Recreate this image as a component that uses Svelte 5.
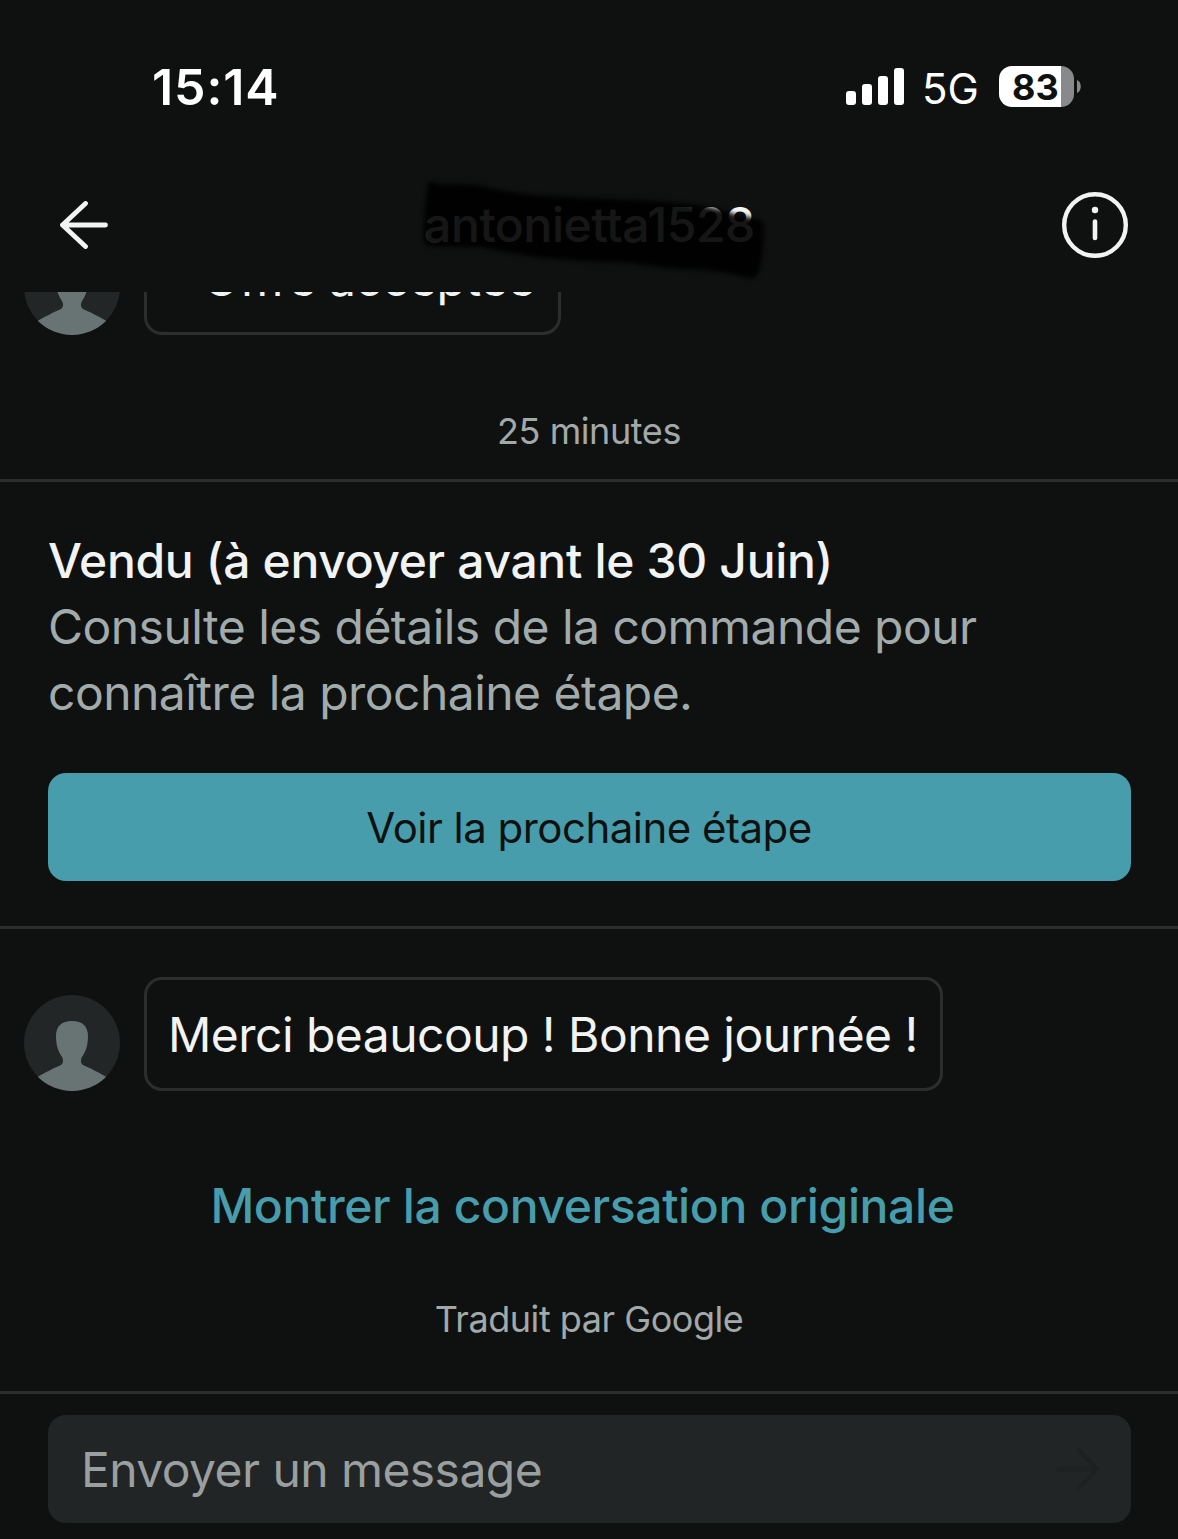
<script>
  const card = {
    title: 'Vendu (à envoyer avant le 30 Juin)',
    lines: ['Consulte les détails de la commande pour', 'connaître la prochaine étape.'],
    action: 'Voir la prochaine étape'
  };
  const bars = [
    { x: 0, h: 14 },
    { x: 16, h: 21 },
    { x: 32, h: 29 },
    { x: 48, h: 37 }
  ];
</script>

{#snippet avatar()}
  <svg class="avatar" viewBox="0 0 96 96" aria-hidden="true">
    <clipPath id="disc"><circle cx="48" cy="48" r="48" /></clipPath>
    <g clip-path="url(#disc)">
      <rect width="96" height="96" fill="#222627" />
      <path
        fill="#687474"
        d="M48 26C58 26 64 31 64 41C64 51 61.500 57 58 62C56.500 65 56.500 68 59 70C66 73 74 77 84 83V96H12V83C22 77 30 73 37 70C39.500 68 39.500 65 38 62C34.500 57 32 51 32 41C32 31 38 26 48 26Z"
      />
    </g>
  </svg>
{/snippet}

<div class="screen">
  <div class="status">
    <span class="time">15:14</span>
    <div class="indicators">
      <svg class="signal" viewBox="0 0 58 37" aria-hidden="true">
        {#each bars as b}
          <rect x={b.x} y={37 - b.h} width="10" height={b.h} rx="3" fill="#fff" />
        {/each}
      </svg>
      <span class="network">5G</span>
      <div class="battery"><span>83</span></div>
      <svg class="nub" viewBox="0 0 4 13" aria-hidden="true"><path d="M0 0C5 2 5 11 0 13Z" fill="#88898a" /></svg>
    </div>
  </div>

  <header>
    <svg class="back" viewBox="0 0 48 48" aria-hidden="true">
      <path d="M25.500 2.500L2.500 24L25.500 45.500M2.500 24H45.500" />
    </svg>
    <div class="name">
      <span>antonietta1528</span>
      <svg class="scribble" viewBox="0 0 370 120" aria-hidden="true">
        <path
          d="M17 11Q20 7 27 12Q50 11 72 14Q95 20 125 23Q170 26 215 27Q255 29 288 33Q312 37 326 43Q345 45 352 50Q354 53 353 60Q352 90 347 102Q344 108 336 106Q310 98 270 97Q240 95 220 91Q170 90 130 86Q95 81 70 75Q40 76 16 74Q11 70 12 58Q13 35 17 11Z"
        />
      </svg>
    </div>
    <svg class="info" viewBox="0 0 66 66" aria-hidden="true">
      <circle cx="33" cy="33" r="30.800" fill="none" stroke="#f2f3f3" stroke-width="4.400" />
      <circle cx="33" cy="18" r="3.200" fill="#f2f3f3" />
      <path d="M33 29.500V46" stroke="#f2f3f3" stroke-width="4.600" stroke-linecap="round" />
    </svg>
  </header>

  <main>
    <div class="row first">
      {@render avatar()}
      <div class="bubble offer"><span>Offre acceptée</span></div>
    </div>

    <time class="stamp">25 minutes</time>

    <section class="card">
      <h2><span>{card.title}</span></h2>
      <p>
        {#each card.lines as line}<span>{line}</span>{/each}
      </p>
      <button><span>{card.action}</span></button>
    </section>

    <div class="row second">
      {@render avatar()}
      <div class="bubble"><span>Merci beaucoup ! Bonne journée !</span></div>
    </div>

    <a class="original" href="#original"><span>Montrer la conversation originale</span></a>
    <div class="credit">Traduit par Google</div>
  </main>

  <footer>
    <div class="field">
      <span>Envoyer un message</span>
      <svg class="send" viewBox="0 0 44 44" aria-hidden="true">
        <path d="M2.500 22H41M22.500 2.500L41 22L22.500 41.500" />
      </svg>
    </div>
  </footer>
</div>

<style>
  :global(body) {
    margin: 0;
    background: #0f1110;
  }
  * {
    box-sizing: border-box;
  }
  .screen {
    width: 1178px;
    height: 1539px;
    overflow: hidden;
    display: flex;
    flex-direction: column;
    background: #0f1110;
    color: #f2f3f3;
    font: 400 48px/66px Inter, 'Liberation Sans', sans-serif;
    letter-spacing: -0.53px;
    white-space: nowrap;
  }
  .status {
    height: 158px;
    flex: none;
    display: flex;
    justify-content: space-between;
    padding: 54px 97px 0 152px;
    color: #fff;
  }
  .time {
    font-size: 50px;
    font-weight: 600;
    letter-spacing: 0.9px;
  }
  .indicators {
    display: flex;
    align-items: center;
    height: 65px;
    letter-spacing: 0;
  }
  .signal {
    width: 58px;
    height: 37px;
    margin-right: 18px;
  }
  .network {
    width: 77px;
    font-size: 42px;
    padding-top: 4px;
  }
  .battery {
    width: 75px;
    height: 41px;
    border-radius: 13px;
    background: linear-gradient(90deg, #fff 62px, #88898a 62px);
    color: #0f1110;
    font-size: 36px;
    font-weight: 650;
    line-height: 42px;
    padding-left: 13px;
  }
  .nub {
    width: 4px;
    height: 13px;
    margin-left: 3px;
  }
  header {
    height: 134px;
    flex: none;
    display: flex;
    align-items: center;
    justify-content: space-between;
    padding: 0 50px 0 60px;
  }
  .back {
    width: 48px;
    height: 48px;
  }
  .back path {
    fill: none;
    stroke: #f2f3f3;
    stroke-width: 4.8;
    stroke-linecap: round;
    stroke-linejoin: round;
  }
  .info {
    width: 66px;
    height: 66px;
  }
  .name {
    position: relative;
    font-weight: 500;
    letter-spacing: -0.4px;
    margin-left: 9px;
    margin-top: -1px;
  }
  .scribble {
    position: absolute;
    left: -13px;
    top: -20px;
    width: 370px;
    height: 120px;
    overflow: visible;
  }
  .scribble path {
    fill: #000;
    fill-opacity: 0.91;
    filter: blur(2.2px);
  }
  main {
    height: 1099px;
    flex: none;
    overflow: hidden;
    display: flex;
    flex-direction: column;
  }
  .row {
    display: flex;
    align-items: flex-end;
    gap: 24px;
    padding-left: 24px;
    flex: none;
  }
  .avatar {
    width: 96px;
    height: 96px;
    flex: none;
  }
  .first {
    margin-top: -72px;
    height: 115px;
  }
  .second {
    height: 114px;
    margin-top: 48px;
  }
  .bubble {
    height: 114px;
    border: 3px solid #2c2d2e;
    border-radius: 18px;
    padding: 22px 22px 0 21px;
  }
  .first .bubble {
    width: 417px;
    height: 115px;
    padding-top: 23px;
    padding-left: 56px;
  }
  .second .bubble {
    width: 799px;
  }
  .stamp {
    font-size: 36px;
    letter-spacing: -0.42px;
    line-height: 48px;
    text-align: center;
    color: #a2a9a9;
    margin: 72px 0 24px;
  }
  .card {
    flex: none;
    height: 450px;
    border-top: 3px solid #2c2d2e;
    border-bottom: 3px solid #2c2d2e;
    padding: 46px 47px 0 48px;
  }
  h2 {
    margin: 0;
    font: inherit;
    font-weight: 500;
    letter-spacing: -0.33px;
  }
  p {
    margin: 0;
    color: #a2abab;
  }
  p span {
    display: block;
    width: max-content;
  }
  button {
    display: block;
    width: 1083px;
    height: 108px;
    margin-top: 47px;
    padding: 2px 1px 0 0;
    border: 0;
    border-radius: 18px;
    background: #479dab;
    color: #0f1110;
    font: inherit;
    font-size: 42px;
    letter-spacing: -0.52px;
  }
  .original {
    margin: 82px 13px 0 0;
    text-align: center;
    text-decoration: none;
    font-weight: 500;
    letter-spacing: -0.37px;
    color: #479dab;
  }
  .credit {
    margin-top: 56px;
    font-size: 36px;
    letter-spacing: -0.46px;
    line-height: 48px;
    text-align: center;
    color: #a2a9a9;
  }
  footer {
    height: 148px;
    flex: none;
    border-top: 3px solid #2c2d2e;
    padding: 21px 47px 0 48px;
  }
  .field {
    height: 108px;
    display: flex;
    align-items: center;
    justify-content: space-between;
    padding: 2px 31px 0 33px;
    border-radius: 18px;
    background: #222526;
    color: #9a9f9f;
    letter-spacing: -0.57px;
  }
  .send {
    width: 44px;
    height: 44px;
    margin-top: -2px;
  }
  .send path {
    fill: none;
    stroke: #1e2122;
    stroke-width: 4.6;
    stroke-linecap: round;
    stroke-linejoin: round;
  }
</style>
